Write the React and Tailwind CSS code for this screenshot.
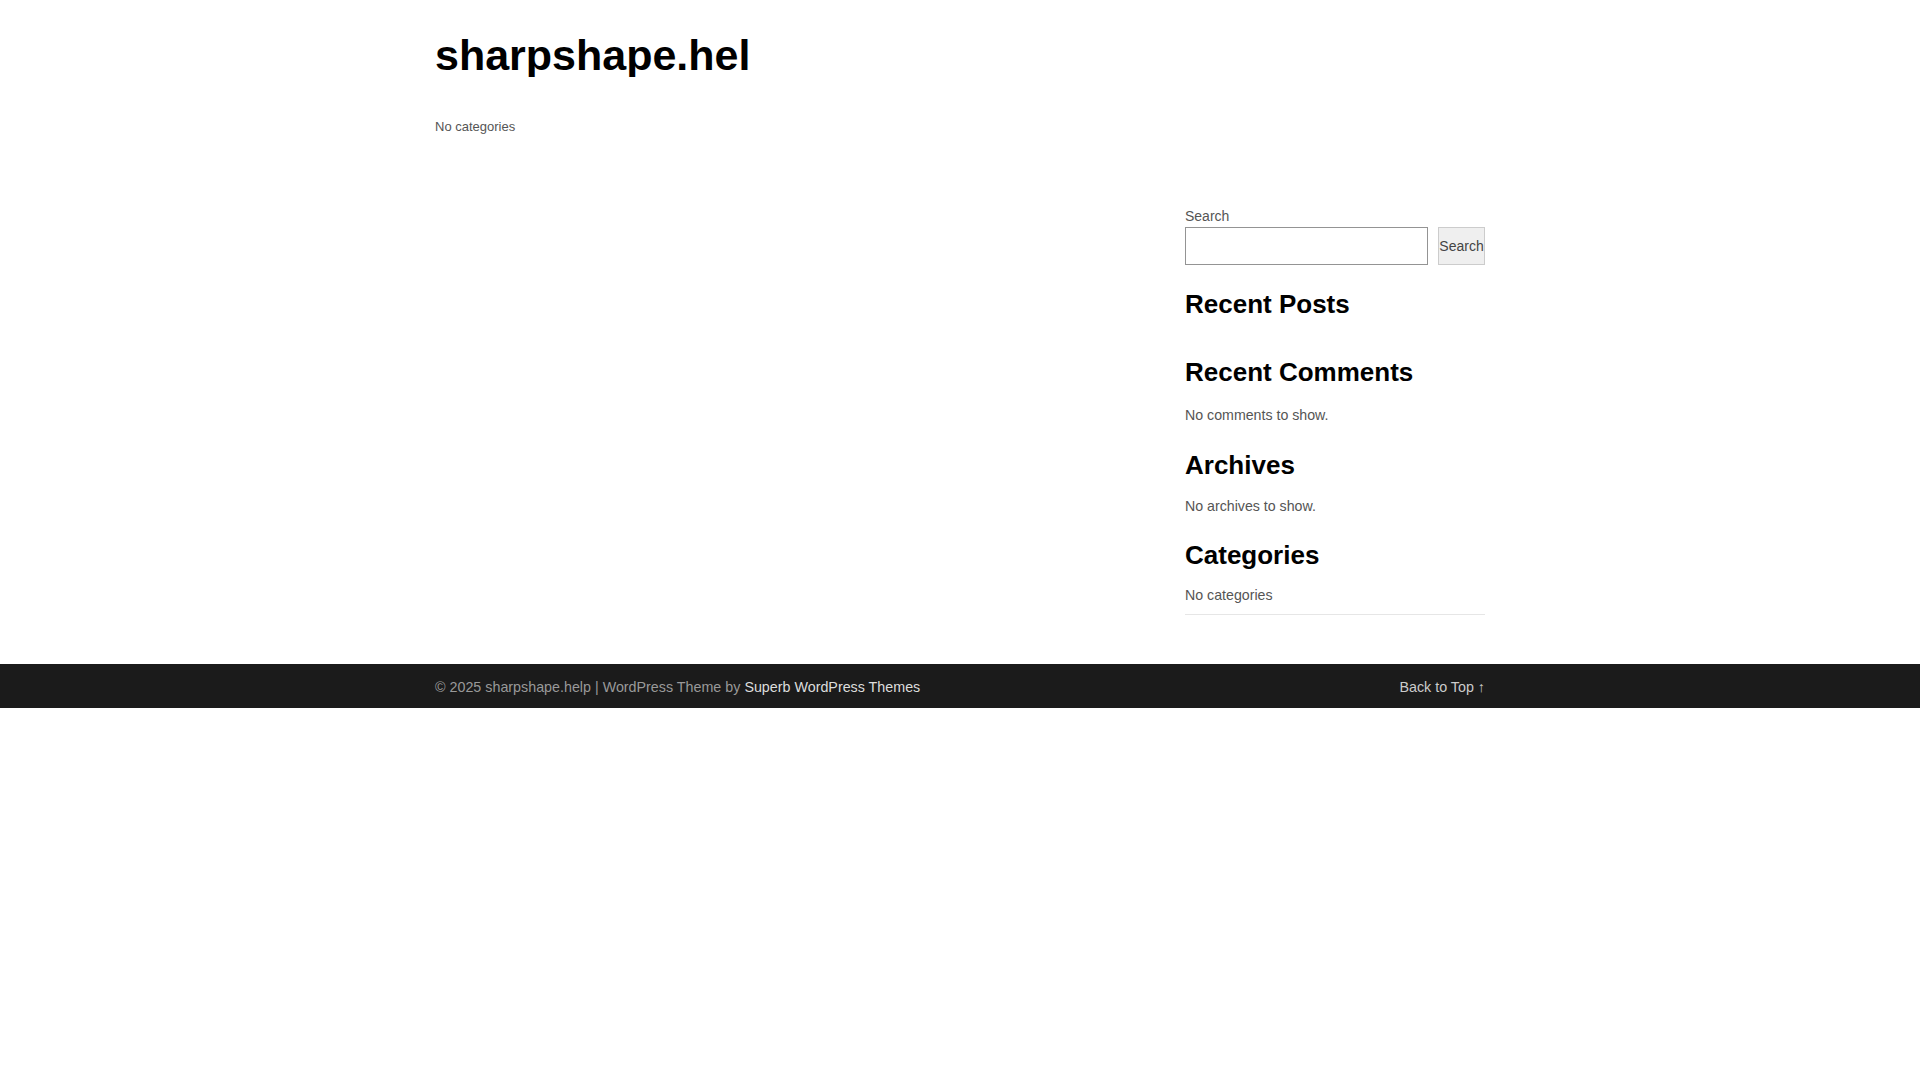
import React from 'react';

const font = { fontFamily: '"Liberation Sans", Arial, sans-serif' };

const Widget = ({ title, children, className = '' }) => (
  <section className={className}>
    <h2 className="text-[26px] leading-[31px] font-bold text-black">{title}</h2>
    {children}
  </section>
);

export default function App() {
  return (
    <div className="min-h-screen bg-white" style={font}>
      <header className="w-[1050px] mx-auto pt-[33px]">
        <div className="w-[315px] overflow-hidden whitespace-nowrap">
          <h1 className="text-[43px] leading-[44px] font-bold text-black">sharpshape.help</h1>
        </div>
        <nav className="mt-[40px] text-[13px] leading-[20px] text-[#555]">No categories</nav>
      </header>

      <div className="w-[1050px] mx-auto flex mt-[69px]">
        <main className="flex-1" />

        <aside className="w-[300px] text-[14px] text-[#555]">
          <form onSubmit={(e) => e.preventDefault()}>
            <label className="block leading-[21px]">Search</label>
            <div className="flex gap-[10px]">
              <input
                type="text"
                className="flex-1 min-w-0 h-[38px] border border-[#949494] bg-white px-2 outline-none"
              />
              <button
                type="submit"
                className="w-[47px] h-[38px] border border-[#ccc] bg-[#efefef] text-[#444] text-[14px] flex items-center justify-center"
              >
                Search
              </button>
            </div>
          </form>

          <Widget title="Recent Posts" className="mt-[24px]" />

          <Widget title="Recent Comments" className="mt-[37px]">
            <p className="mt-[17px] leading-[20px] text-[14.2px]">No comments to show.</p>
          </Widget>

          <Widget title="Archives" className="mt-[25px]">
            <p className="mt-[15px] leading-[20px] text-[14.2px]">No archives to show.</p>
          </Widget>

          <Widget title="Categories" className="mt-[24px]">
            <p className="mt-[14px] leading-[20px] text-[14.2px] pb-[9px] border-b border-[#e6e6e6]">No categories</p>
          </Widget>
        </aside>
      </div>

      <footer className="mt-[49px] bg-[#1b1b1b]">
        <div className="w-[1050px] mx-auto flex justify-between pt-[13px] pb-[11px] text-[14.3px] leading-[20px]">
          <p className="text-[#999]">
            © 2025 sharpshape.help | WordPress Theme by{' '}
            <a href="#" className="text-[#ddd]">Superb WordPress Themes</a>
          </p>
          <a href="#" className="text-[#ccc]">Back to Top ↑</a>
        </div>
      </footer>
    </div>
  );
}
